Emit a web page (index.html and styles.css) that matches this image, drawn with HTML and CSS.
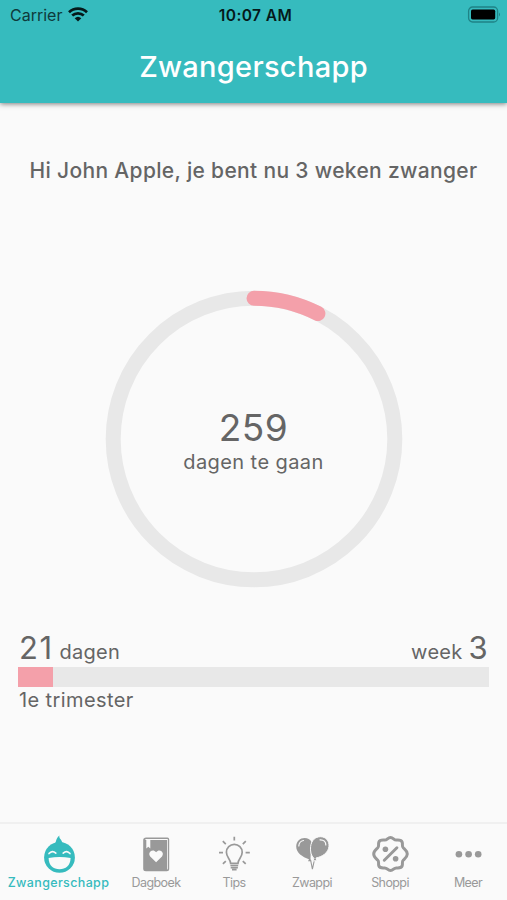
FILE: index.html
```
<!DOCTYPE html>
<html lang="nl">
<head>
<meta charset="UTF-8" />
<meta name="viewport" content="width=device-width, initial-scale=1">
<title>Zwangerschapp</title>
<link rel="stylesheet" href="styles.css">
</head>
<body>

<div class="app">

    <header class="header">
        <div class="statusbar">
            <div class="carrier">
                <span>Carrier</span>
                <svg width="20" height="15" viewBox="0 0 20 15">
                    <g fill="none" stroke="#05191a" stroke-width="2.7">
                        <path d="M1 5.2a13 13 0 0 1 18 0" />
                        <path d="M4.2 8.6a8.4 8.4 0 0 1 11.6 0" />
                    </g>
                    <path d="M6.7 11.3a4.8 4.8 0 0 1 6.6 0L10 14.6z" fill="#05191a" />
                </svg>
            </div>
            <div class="time">10:07 AM</div>
            <svg class="battery" width="34" height="17" viewBox="0 0 34 17">
                <rect x="1.6" y="1" width="29" height="15" rx="4" fill="none" stroke="#1f8386" stroke-width="1.3" />
                <rect x="4" y="3.6" width="24.2" height="9.8" rx="1.6" />
                <path d="M32 6.5q2 2 0 4z" fill="#1f8386" />
            </svg>
        </div>
        <h1 class="title">Zwangerschapp</h1>
    </header>

    <main class="content">
        <p class="greeting">Hi John Apple, je bent nu 3 weken zwanger</p>

        <!-- cirkel met resterende dagen -->
        <div class="ring">
            <svg class="ring-svg" width="298" height="298" viewBox="0 0 298 298">
                <circle cx="149" cy="149" r="140.8" fill="none" stroke="#e8e8e8" stroke-width="15" />
                <path d="M149 8.2A140.8 140.8 0 0 1 212.9 23.5" fill="none" stroke="#f4a0aa" stroke-width="15" stroke-linecap="round" />
            </svg>
            <div class="ring-text">
                <div class="ring-number">259</div>
                <div class="ring-label">dagen te gaan</div>
            </div>
        </div>

        <!-- voortgang -->
        <div class="progress">
            <div class="progress-top">
                <div class="days"><b>21</b> <span>dagen</span></div>
                <div class="week"><span>week</span> <b>3</b></div>
            </div>
            <div class="bar"><div class="bar-fill" style="width: 7.5%"></div></div>
            <div class="trimester">1e trimester</div>
        </div>
    </main>

    <nav class="tabs">
        <a class="tab active">
            <svg width="40" height="40" viewBox="0 0 40 40">
                <path d="M14.6 9.5C18 7.8 15.8 4 20.5.4C19.2 3.6 23.8 4.2 23.4 9.5z" fill="currentColor" />
                <circle cx="20.5" cy="22.4" r="15.4" fill="currentColor" />
                <path d="M9.6 23q11-2.2 22 0C31.4 30.6 26.6 34.2 20.5 34.2S9.8 30.6 9.6 23z" fill="#fafafa" />
                <path d="M10 18.6q3.2-3.8 6.8-.4M24.2 18.2q3.6-3.4 6.8.4" fill="none" stroke="#fafafa" stroke-width="1.6" stroke-linecap="round" />
            </svg>
            <span>Zwangerschapp</span>
        </a>
        <a class="tab">
            <svg width="40" height="40" viewBox="0 0 40 40">
                <path d="M10.2 2.4H31.4Q33.2 2.4 33.2 4.6V33.8Q33.2 36.3 30.7 36.3H9.8Q7.2 36.3 7.2 33.8V5.1Q7.2 2.4 10.2 2.4z" fill="currentColor" />
                <path d="M9.6 4.1H31.8V33.6Q31.8 34.6 31 34.8V5.1H9.3z" fill="#fafafa" />
                <path d="M10.3 4.5h4v9l-2-1.7-2 1.7z" fill="#fafafa" />
                <path d="M20.1 27.3l-5.9-5.9c-3-3.6 2.2-8.4 5.9-4.2 3.7-4.2 8.9.6 5.9 4.2z" fill="#fafafa" />
            </svg>
            <span>Dagboek</span>
        </a>
        <a class="tab">
            <svg width="40" height="40" viewBox="0 0 40 40" fill="none" stroke="currentColor" stroke-width="1.7">
                <path d="M16.6 28.3c0-4.2-4.2-5.6-4.2-11a7.9 7.9 0 0 1 15.8 0c0 5.4-4.2 6.8-4.2 11z" />
                <path d="M16.4 30.5h7.8M16.7 32.7h7.2M18 34.7h4.6" />
                <path d="M20.3 1.8v3.7M8.8 6.1l3 3M31.8 6.1l-3 3M5 17.6h4M31.6 17.6h4.2M8.9 28.9l2.9-2.8M31.7 28.9l-2.9-2.8" />
            </svg>
            <span>Tips</span>
        </a>
        <a class="tab">
            <svg width="40" height="40" viewBox="0 0 40 40">
                <path d="M18.6 25L20.4 34.2 22.4 25" fill="none" stroke="currentColor" stroke-width="1.1" />
                <path d="M17 24.2C10.4 22 4.2 17.8 4.2 11.5C4.2 6 8.2 2.9 12.6 2.9C15.8 2.9 18 4.3 19.2 6.3L18.5 23.8L19.2 26.2H16z" fill="currentColor" />
                <path d="M22 23.5C18.9 20.6 18.1 16 18.6 11.5C19.4 5.3 23.4 1.7 28.4 1.7C34 1.7 37.4 6 37 11.3C36.4 18 30 21.8 24 23L24.8 25.8H20.7z" fill="currentColor" stroke="#fafafa" stroke-width="1" />
                <path d="M6.8 11c.2-3 1.8-5 4.7-5.5M28 4.8c3.8-.2 6 2 5.8 5.2" fill="none" stroke="#fafafa" stroke-width="1.2" stroke-linecap="round" />
            </svg>
            <span>Zwappi</span>
        </a>
        <a class="tab">
            <svg width="40" height="40" viewBox="0 0 40 40" fill="none" stroke="currentColor" stroke-width="3">
                <path d="M20.5 2.5C23.5 2.5 23.6 5.3 26.5 5.1C29.4 4.9 31.4 4.7 32.2 7.2C33 9.7 31.5 11.2 33.4 13C35.3 14.8 37.3 16.2 37.3 19C37.3 21.8 35.3 23.2 33.4 25C31.5 26.8 33 28.3 32.2 30.8C31.4 33.3 29.4 33.1 26.5 32.9C23.6 32.7 23.5 35.5 20.5 35.5C17.5 35.5 17.4 32.7 14.5 32.9C11.6 33.1 9.6 33.3 8.8 30.8C8 28.3 9.5 26.8 7.6 25C5.7 23.2 3.7 21.8 3.7 19C3.7 16.2 5.7 14.8 7.6 13C9.5 11.2 8 9.7 8.8 7.2C9.6 4.7 11.6 4.9 14.5 5.1C17.4 5.3 17.5 2.5 20.5 2.5z" />
                <path d="M14.3 25.2L26.9 12.8" stroke-linecap="round" />
                <g fill="currentColor" stroke="none">
                    <circle cx="15.4" cy="14.2" r="2.8" />
                    <circle cx="25.6" cy="23.8" r="2.8" />
                </g>
            </svg>
            <span>Shoppi</span>
        </a>
        <a class="tab">
            <svg width="40" height="40" viewBox="0 0 40 40" fill="currentColor">
                <circle cx="10.9" cy="19.3" r="3.3" />
                <circle cx="20.6" cy="19.3" r="3.3" />
                <circle cx="30.2" cy="19.3" r="3.3" />
            </svg>
            <span>Meer</span>
        </a>
    </nav>

</div>

</body>
</html>
```
FILE: styles.css
```
* {
    box-sizing: border-box;
}

body {
    margin: 0;
    background: #fafafa;
    font-family: Inter, "Liberation Sans", sans-serif;
    color: #656565;
}

.app {
    display: flex;
    flex-direction: column;
    height: 900px;
    overflow: hidden;
}

/* header */
.header {
    height: 103px;
    background: #36bbbe;
    box-shadow: 0 1px 5px rgba(0, 0, 0, 0.5);
}

.statusbar {
    display: grid;
    grid-template-columns: 1fr auto 1fr;
    align-items: center;
    height: 30px;
    padding: 0 6px 0 10px;
    color: #05191a;
    font-size: 16px;
}

.carrier {
    display: flex;
    align-items: center;
    gap: 6px;
    color: #0e3a3b;
}

.carrier svg {
    margin-top: -2px;
}

.time {
    font-weight: 600;
    font-size: 15.5px;
    letter-spacing: 0.4px;
}

.battery {
    justify-self: end;
    margin-top: -2px;
}

.title {
    margin: 0;
    color: #fff;
    font-size: 29px;
    line-height: 36px;
    padding-top: 19px;
    font-weight: 500;
    letter-spacing: 0.3px;
    text-align: center;
}

/* content */
.content {
    flex: 1;
    display: flex;
    flex-direction: column;
    align-items: center;
}

.greeting {
    margin: 55px 0 0;
    height: 26px;
    line-height: 26px;
    font-size: 21px;
    font-weight: 500;
    letter-spacing: 0.33px;
    white-space: nowrap;
}

.ring {
    display: grid;
    place-items: center;
    margin-top: 106px;
    width: 298px;
    height: 298px;
}

.ring-svg,
.ring-text {
    grid-area: 1 / 1;
}

.ring-text {
    padding-top: 4px;
    text-align: center;
}

.ring-number {
    font-size: 37px;
    line-height: 42px;
    letter-spacing: 0.5px;
}

.ring-label {
    font-size: 20px;
    line-height: 26px;
    letter-spacing: 0.42px;
}

/* progress */
.progress {
    width: 471px;
    margin-top: 41px;
    font-size: 20px;
    letter-spacing: 0.3px;
}

.progress-top {
    display: flex;
    justify-content: space-between;
    height: 38px;
    line-height: 38px;
}

.progress-top b {
    font-size: 31px;
    font-weight: 400;
}

.days {
    padding-left: 1px;
}

.days b {
    letter-spacing: 1.5px;
}

.week {
    padding-right: 1px;
}

.bar {
    height: 20px;
    background: #e8e8e8;
}

.bar-fill {
    height: 100%;
    background: #f4a0aa;
}

.trimester {
    padding-left: 1px;
    line-height: 27px;
    letter-spacing: 0.4px;
}

/* tabs */
.tabs {
    display: grid;
    grid-template-columns: 1.5fr repeat(5, 1fr);
    height: 78px;
    padding-top: 11px;
    border-top: 2px solid #f0f0f0;
}

.tab {
    display: flex;
    flex-direction: column;
    align-items: center;
    color: #999;
    font-size: 12.5px;
    line-height: 16px;
    letter-spacing: -0.6px;
}

.tab svg {
    display: block;
}

.active {
    color: #36bbbe;
    font-weight: 500;
    letter-spacing: 0.35px;
}
```
